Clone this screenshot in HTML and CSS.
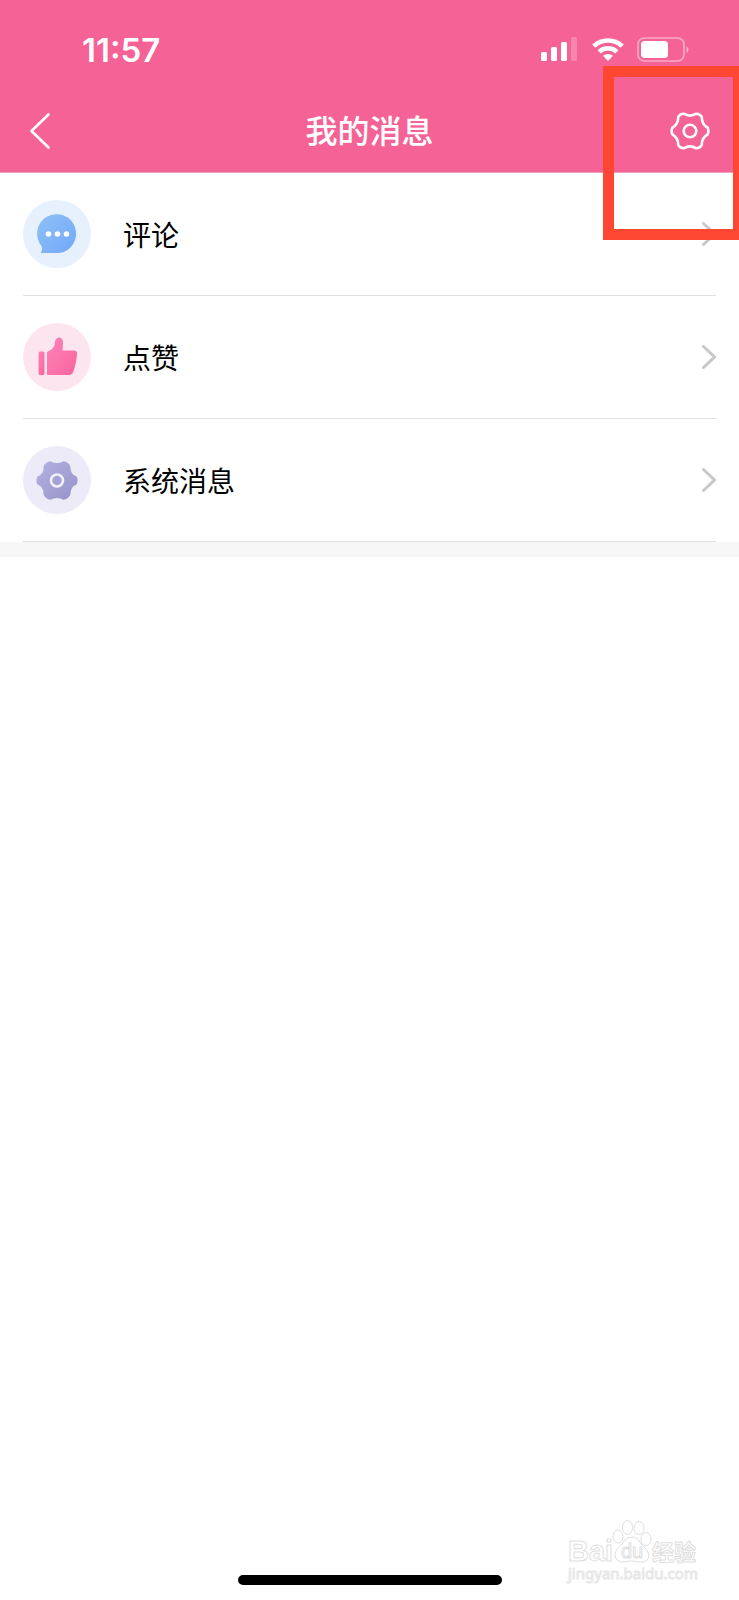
FILE: index.html
```html
<!DOCTYPE html>
<html lang="zh-CN">
<head>
<meta charset="utf-8">
<meta name="viewport" content="width=device-width, initial-scale=1">
<title>我的消息</title>
<link rel="stylesheet" href="styles.css">
</head>
<body>
<div class="screen">
  <header class="top">
    <div class="status">
      <span class="time">11:57</span>
      <div class="indicators">
        <svg class="signal" width="38" height="24" viewBox="0 0 38 24" fill="#fff" aria-hidden="true">
          <rect x="0" y="15" width="6" height="9" rx="1.5"/>
          <rect x="10" y="10" width="6" height="14" rx="1.5"/>
          <rect x="20" y="5" width="6" height="19" rx="1.5"/>
          <rect x="30" y="0" width="6" height="24" rx="1.5" opacity=".22"/>
        </svg>
        <svg class="wifi" width="32" height="24" viewBox="0 0 32 24" fill="none" stroke="#fff" stroke-width="4.6" aria-hidden="true">
          <path d="M1.8 9.2a20.5 20.5 0 0 1 28.4 0"/>
          <path d="M7.2 14.8a12.8 12.8 0 0 1 17.6 0"/>
          <path d="M16 24l-5-5.2a7.6 7.6 0 0 1 10 0z" fill="#fff" stroke="none"/>
        </svg>
        <svg class="battery" width="52" height="25" viewBox="0 0 52 25" aria-hidden="true">
          <rect x="1" y="1" width="46" height="23" rx="6.5" fill="none" stroke="#fff" stroke-opacity=".45" stroke-width="1.7"/>
          <rect x="4" y="4" width="27" height="17" rx="3.5" fill="#fff"/>
          <path d="M49.500 9q2 1.500 2 3.500t-2 3.500z" fill="#fff" opacity=".5"/>
        </svg>
      </div>
    </div>
    <nav class="bar">
      <button class="icon-button" type="button" aria-label="返回">
        <svg width="22" height="38" viewBox="0 0 22 38" fill="none" stroke="#fff" stroke-width="2.6" stroke-linecap="round" stroke-linejoin="round"><path d="M19.5 2.5L2.5 19l17 16.5"/></svg>
      </button>
      <h1 class="title">我的消息</h1>
      <button class="icon-button end" type="button" aria-label="设置">
        <svg width="40" height="40" viewBox="-20 -20 40 40" fill="none" stroke="#fff" stroke-width="2.6" stroke-linejoin="round">
          <path d="M17.7 3.3Q11.5 6.75 11.8 14.2Q10 17.2 6.3 17.3Q0 13.5 -6.3 17.3Q-10 17.2 -11.8 14.2Q-11.5 6.75 -17.7 3.3Q-19 0 -17.7 -3.3Q-11.5 -6.75 -11.8 -14.2Q-10 -17.2 -6.3 -17.3Q0 -13.5 6.3 -17.3Q10 -17.2 11.8 -14.2Q11.5 -6.75 17.7 -3.3Q19 0 17.7 3.3Z"/>
          <circle r="6.3"/>
        </svg>
      </button>
    </nav>
  </header>

  <main class="list">
    <a class="row" href="#comments">
      <svg class="badge" width="68" height="68" viewBox="0 0 68 68" aria-hidden="true">
        <defs><linearGradient id="blue" x1="0" y1="0" x2="1" y2="1"><stop offset="0" stop-color="#8fc0f6"/><stop offset="1" stop-color="#72a8fa"/></linearGradient></defs>
        <circle cx="34" cy="34" r="34" fill="#e7f1fe"/>
        <path d="M17.5 53Q20 50 18.5 46A19.5 19.5 0 1 1 36 53Z" fill="url(#blue)"/>
        <g fill="#fff"><circle cx="25.5" cy="34" r="2.8"/><circle cx="34.5" cy="34" r="2.8"/><circle cx="43.5" cy="34" r="2.8"/></g>
      </svg>
      <span class="label">评论</span>
      <svg class="arrow" width="14" height="24" viewBox="0 0 14 24" aria-hidden="true"><path d="M1.5 1.5L12.5 12l-11 10.500"/></svg>
    </a>
    <a class="row" href="#likes">
      <svg class="badge" width="68" height="68" viewBox="0 0 68 68" aria-hidden="true">
        <defs><linearGradient id="pink" x1="0" y1="0" x2="1" y2="1"><stop offset="0" stop-color="#fb85ba"/><stop offset="1" stop-color="#fb639c"/></linearGradient></defs>
        <circle cx="34" cy="34" r="34" fill="#fde5f0"/>
        <rect x="15.500" y="28.500" width="6" height="23.500" rx="1.500" fill="url(#pink)"/>
        <path d="M24 29.500Q24 28.500 26 28Q32 25.500 32 18.500Q33 14.500 36.500 14.500Q40 15 40 20L39.500 27.500H51.500Q54.500 28 54 31.500Q53.500 39 51 47Q49.500 52 46 52H25Q24 52 24 51Z" fill="url(#pink)"/>
      </svg>
      <span class="label">点赞</span>
      <svg class="arrow" width="14" height="24" viewBox="0 0 14 24" aria-hidden="true"><path d="M1.5 1.5L12.5 12l-11 10.500"/></svg>
    </a>
    <a class="row" href="#system">
      <svg class="badge" width="68" height="68" viewBox="0 0 68 68" aria-hidden="true">
        <defs><linearGradient id="violet" x1="0" y1="0" x2="1" y2="1"><stop offset="0" stop-color="#b3b2df"/><stop offset="1" stop-color="#9692cb"/></linearGradient></defs>
        <circle cx="34" cy="34" r="34" fill="#ecebf7"/>
        <path transform="translate(34 34.500)" d="M19.500 4Q13 6.500 13.300 14.600Q11 18.700 6.500 19.300Q0 15.500 -6.500 19.300Q-11 18.700 -13.300 14.600Q-13 6.500 -19.500 4Q-21.500 0 -19.500 -4Q-13 -6.500 -13.300 -14.600Q-11 -18.700 -6.500 -19.300Q0 -15.500 6.500 -19.300Q11 -18.700 13.300 -14.600Q13 -6.500 19.500 -4Q21.500 0 19.500 4Z" fill="url(#violet)"/>
        <circle cx="34" cy="34.500" r="6" fill="none" stroke="#f1f0fa" stroke-width="2.600"/>
      </svg>
      <span class="label">系统消息</span>
      <svg class="arrow" width="14" height="24" viewBox="0 0 14 24" aria-hidden="true"><path d="M1.5 1.5L12.5 12l-11 10.500"/></svg>
    </a>
  </main>
  <div class="band"></div>

  <footer class="foot"><div class="home"></div></footer>

  <div class="highlight"></div>
  <svg class="watermark" width="136" height="64" viewBox="0 0 136 64" role="img" aria-label="Baidu 经验">
    <g fill="#fff" stroke="#dfdfdf" stroke-width="1">
      <text class="wm-latin" x="1" y="41">Bai</text>
      <ellipse cx="51" cy="16.500" rx="5" ry="6.500"/>
      <ellipse cx="60.500" cy="7.500" rx="5" ry="7"/>
      <ellipse cx="72" cy="8" rx="5" ry="6.500"/>
      <ellipse cx="79" cy="19" rx="5" ry="6.500"/>
      <path d="M65 17Q59 17 56 23Q47 31 48 36Q50 43 57 42Q65 40 72 42Q81 43 82 36Q82 31 74 24Q71 17 65 17Z"/>
      <text class="wm-du" x="54" y="38">du</text>
      <text class="wm-cjk" x="85" y="40">经验</text>
    </g>
    <text class="wm-url" x="1" y="59">jingyan.baidu.com</text>
  </svg>
</div>
</body>
</html>
```
FILE: styles.css
```css
* {
  box-sizing: border-box;
}

body {
  margin: 0;
  background: #fff;
  color: #000;
  font-family: Inter, "Noto Sans CJK SC", sans-serif;
}

.screen {
  position: relative;
  display: flex;
  flex-direction: column;
  min-height: 100vh;
  overflow: hidden;
}

.top {
  background: #f56396;
  color: #fff;
  border-bottom: 1px solid #eba3bd;
}

.status {
  display: flex;
  align-items: center;
  justify-content: space-between;
  height: 90px;
  padding: 8px 50px 0 82px;
}

.time {
  padding-top: 2px;
  font-size: 33px;
  line-height: 40px;
  font-weight: 600;
}

.indicators {
  display: flex;
  align-items: center;
  gap: 13px;
}

.bar {
  display: grid;
  grid-template-columns: 1fr auto 1fr;
  align-items: center;
  height: 82px;
  padding: 0 29px;
}

.icon-button {
  display: flex;
  justify-self: start;
  padding: 0;
  border: 0;
  background: none;
  cursor: pointer;
}

.icon-button.end {
  justify-self: end;
}

.title {
  margin: 0;
  padding-top: 2px;
  font-size: 32px;
  line-height: 40px;
  font-weight: 500;
}

.list {
  padding: 0 23px;
}

.row {
  display: flex;
  align-items: center;
  height: 123px;
  border-bottom: 1px solid #e0e0e0;
  color: inherit;
  text-decoration: none;
}

.label {
  flex: 1;
  padding: 4px 0 0 32px;
  font-size: 28px;
  line-height: 40px;
}

.arrow {
  fill: none;
  stroke: #c8c8c8;
  stroke-width: 3;
  stroke-linecap: round;
}

.band {
  height: 15px;
  background: #f7f7f7;
}

.foot {
  display: flex;
  justify-content: center;
  margin-top: auto;
  padding-bottom: 15px;
}

.home {
  width: 264px;
  height: 10px;
  border-radius: 5px;
  background: #000;
}

.highlight {
  position: absolute;
  top: 66px;
  right: 0;
  width: 136px;
  height: 174px;
  border: 11px solid #fe4733;
  border-right-width: 6px;
  pointer-events: none;
}

.watermark {
  position: absolute;
  right: 36px;
  bottom: 16px;
  overflow: visible;
}

.wm-latin {
  font: 700 29px "Liberation Sans", sans-serif;
}

.wm-du {
  font: 400 20px "Liberation Sans", sans-serif;
}

.wm-cjk {
  font: 700 22px "Noto Sans CJK SC", sans-serif;
}

.wm-url {
  font: 400 15px "Noto Sans", sans-serif;
  fill: #fff;
  stroke: #e6e6e6;
  stroke-width: 1px;
}
```
